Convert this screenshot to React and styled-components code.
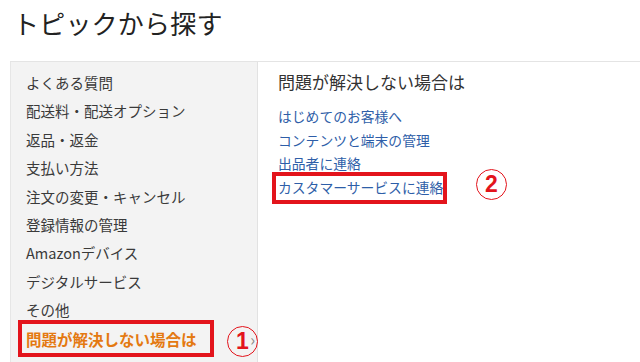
import styled, { createGlobalStyle } from "styled-components";

const GlobalStyle = createGlobalStyle`
  html, body {
    margin: 0;
    background: #fff;
    font-family: "Noto Sans CJK JP", "Noto Sans", sans-serif;
  }
`;

const topics = [
  "よくある質問",
  "配送料・配送オプション",
  "返品・返金",
  "支払い方法",
  "注文の変更・キャンセル",
  "登録情報の管理",
  "Amazonデバイス",
  "デジタルサービス",
  "その他",
  "問題が解決しない場合は",
];

const links = [
  "はじめてのお客様へ",
  "コンテンツと端末の管理",
  "出品者に連絡",
  "カスタマーサービスに連絡",
];

const App = () => {
  return (
    <Page>
      <GlobalStyle />
      <Title>トピックから探す</Title>
      <Panels>
        <Sidebar>
          {topics.map((t, i) => {
            const active = i === topics.length - 1;
            return (
              <Topic key={t} $active={active}>
                {t}
                {active && (
                  <>
                    <Chevron>›</Chevron>
                    <Badge $left="201px" $top="1px">1</Badge>
                  </>
                )}
              </Topic>
            );
          })}
        </Sidebar>
        <Content>
          <Heading>問題が解決しない場合は</Heading>
          <LinkList>
            {links.map((l, i) => {
              const marked = i === links.length - 1;
              return (
                <LinkRow key={l}>
                  <Link href="#" $marked={marked}>
                    {l}
                    {marked && <Badge $left="198px" $top="-7px">2</Badge>}
                  </Link>
                </LinkRow>
              );
            })}
          </LinkList>
        </Content>
      </Panels>
    </Page>
  );
};

const Page = styled.div`
  padding-left: 10px;
  min-height: 100vh;
  box-sizing: border-box;
  display: flex;
  flex-direction: column;
`;

const Title = styled.h1`
  margin: 0;
  padding: 8px 0 0 3px;
  font-size: 26px;
  line-height: 30px;
  font-weight: 400;
  color: #222;
  letter-spacing: 0.2px;
`;

const Panels = styled.div`
  margin-top: 23px;
  flex: 1;
  display: grid;
  grid-template-columns: 248px 1fr;
  border-top: 1px solid #e4e4e4;
`;

const Sidebar = styled.ul`
  list-style: none;
  margin: 0;
  padding: 7px 0 0 15px;
  background: #f3f3f3;
  border-left: 1px solid #e6e6e6;
  border-right: 1px solid #e2e2e2;
`;

const Topic = styled.li`
  position: relative;
  font-size: ${(p) => (p.$active ? "15.5px" : "14.5px")};
  line-height: 28.4px;
  color: ${(p) => (p.$active ? "#e47911" : "#3a3a3a")};
  font-weight: ${(p) => (p.$active ? 700 : 400)};

  ${(p) =>
    p.$active &&
    `
    &::after {
      content: "";
      position: absolute;
      left: -8px;
      top: -5px;
      width: 196px;
      height: 37px;
      box-sizing: border-box;
      border: 4px solid #e3141c;
    }
  `}
`;

const Chevron = styled.span`
  position: absolute;
  right: 2px;
  top: 0;
  font-size: 16px;
  font-weight: 400;
  color: #888;
`;

const Badge = styled.span`
  position: absolute;
  left: ${(p) => p.$left};
  top: ${(p) => p.$top};
  width: 31px;
  height: 31px;
  box-sizing: border-box;
  border: 1.5px solid #e3141c;
  border-radius: 50%;
  display: flex;
  align-items: center;
  justify-content: center;
  font-family: "Liberation Sans", Arial, sans-serif;
  font-size: 23px;
  font-weight: 700;
  line-height: 1;
  color: #e3141c;
  z-index: 1;
`;

const Content = styled.div`
  padding: 8px 0 0 20px;
`;

const Heading = styled.h2`
  margin: 0;
  font-size: 17px;
  line-height: 24px;
  font-weight: 400;
  color: #333;
`;

const LinkList = styled.ul`
  list-style: none;
  margin: 10px 0 0;
  padding: 0;
`;

const LinkRow = styled.li`
  line-height: 22.6px;
`;

const Link = styled.a`
  position: relative;
  display: inline-block;
  font-size: 13.8px;
  color: #2e5ea8;
  text-decoration: none;

  ${(p) =>
    p.$marked &&
    `
    &::after {
      content: "";
      position: absolute;
      left: -6px;
      right: -4px;
      top: -4px;
      bottom: -6px;
      border: 4px solid #e3141c;
    }
  `}
`;

export default App;
